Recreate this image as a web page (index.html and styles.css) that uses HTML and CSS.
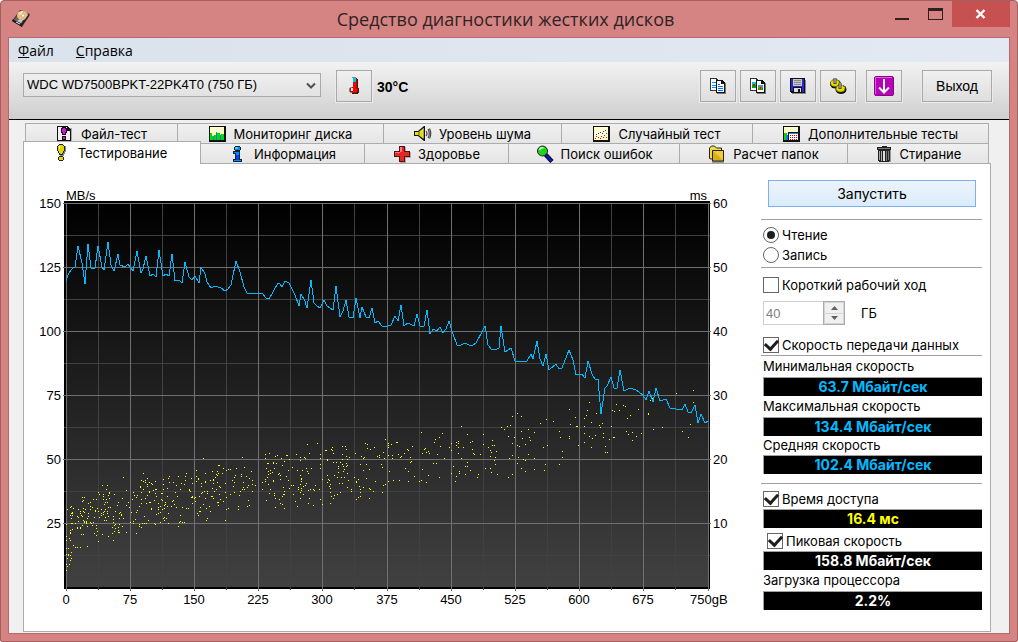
FILE: index.html
```
<!DOCTYPE html>
<html lang="ru">
<head>
<meta charset="utf-8">
<title>Средство диагностики жестких дисков</title>
<link rel="stylesheet" href="styles.css">
</head>
<body>
<div class="window">
  <header class="titlebar">
    <svg class="app-icon" width="20" height="20" viewBox="0 0 20 20" aria-hidden="true">
      <path d="M1 12 9 1 19 5 11 18Z" fill="#3c3a38"/>
      <path d="M1 12 11 18v-2L2 10Z" fill="#1c1c1c"/>
      <path d="M3 11 9 3l7 2-6 9Z" fill="#6b6662"/>
      <ellipse cx="11.500" cy="6.500" rx="5.500" ry="4.500" fill="#e9bd80"/>
      <path d="M7 5a5 4 0 0 1 5-3l-1 4Z" fill="#f7e1bb"/>
      <circle cx="12" cy="6.500" r="1.600" fill="#fff" stroke="#a99" stroke-width=".6"/>
      <path d="m6 12 4 2 2-3-3-1Z" fill="#c8c8c8"/>
      <path d="m5 13 4 2" stroke="#eee"/>
      <path d="m10 17 8-11" stroke="#222" stroke-width="1.500"/>
    </svg>
    <h1 class="title">Средство диагностики жестких дисков</h1>
    <div class="window-buttons">
      <button class="win-btn" aria-label="Свернуть"><svg width="16" height="14" viewBox="0 0 16 14"><path d="M0 11h14v2H0z" fill="#2c2020"/></svg></button>
      <button class="win-btn" aria-label="Развернуть"><svg width="16" height="14" viewBox="0 0 16 14"><path fill-rule="evenodd" d="M0 1h15v12H0zM1 4h13v8H1z" fill="#2c2020"/></svg></button>
      <button class="win-btn win-close" aria-label="Закрыть"><svg width="12" height="10" viewBox="0 0 12 10"><path d="m1.500 1 8 8m0-8-8 8" stroke="#fff" stroke-width="2.400"/></svg></button>
    </div>
  </header>

  <div class="client">
    <nav class="menubar">
      <button class="menu-item"><u>Ф</u>айл</button>
      <button class="menu-item"><u>С</u>правка</button>
    </nav>

    <div class="toolbar">
      <div class="drive-box">
        <select class="drive" aria-label="Диск"><option>WDC WD7500BPKT-22PK4T0 (750 ГБ)</option></select>
        <svg class="chevron" width="10" height="8" viewBox="0 0 10 8"><path d="m1 1.500 4 4 4-4" fill="none" stroke="#505050" stroke-width="2"/></svg>
      </div>
      <button class="tool" aria-label="Температура">
        <svg width="12" height="20" viewBox="0 0 12 20" shape-rendering="crispEdges">
          <path d="M8 3h2v9h1v5h-1v1H4v-1h5v-4H8z" fill="#222"/>
          <path d="M4 2h5v10h1v4H9v1H3v-1H2v-4h2z" fill="#c00"/>
          <path d="M4 2h4v5H4z" fill="#00c4d8"/><path d="M4 2h1v9H4z" fill="#bff"/>
          <path d="M5 6h3v7H5z" fill="#f00"/><path d="M3 12h2v3H3z" fill="#fff"/><path d="M2 11h2v1H2zM1 12h1v4H1zM2 16h2v1H2zM4 1h4v1H4z" fill="#888"/><path d="M5 13h4v3H5z" fill="#f00"/>
        </svg>
      </button>
      <output class="temp">30°C</output>
      <div class="tools">
        <button class="tool" aria-label="Копировать текст">
          <svg width="18" height="18" viewBox="0 0 18 18" shape-rendering="crispEdges">
            <path d="M1 1h6l3 3v10H1z" fill="#333"/><path d="M2 2h5v3h2v8H2z" fill="#fff"/><path d="M3 5h4v1H3zM3 8h5v1H3zM3 10h5v1H3z" fill="#0090ff"/>
            <path d="M9 4h6l2 3v10H8v-1h8V7z" fill="#777"/><path d="M7 3h6l3 3v10H7z" fill="#111"/><path d="M8 4h4v3h3v8H8z" fill="#fff"/><path d="M9 7h2v1H9zM9 9h5v1H9zM9 11h5v1H9zM9 13h5v1H9z" fill="#0070ff"/>
          </svg>
        </button>
        <button class="tool" aria-label="Копировать снимок">
          <svg width="18" height="18" viewBox="0 0 18 18" shape-rendering="crispEdges">
            <path d="M1 1h6l3 3v10H1z" fill="#333"/><path d="M2 2h5v3h2v8H2z" fill="#fff"/><path d="M3 5h5v3H3z" fill="#00c8d0"/><path d="M3 8h5v3H3z" fill="#0a0"/><path d="M4 7h2v2H4z" fill="#e00"/>
            <path d="M9 4h6l2 3v10H8v-1h8V7z" fill="#777"/><path d="M7 3h6l3 3v10H7z" fill="#111"/><path d="M8 4h4v3h3v8H8z" fill="#fff"/><path d="M9 8h5v3H9z" fill="#00b8e0"/><path d="M9 11h5v2H9z" fill="#0a0"/><path d="M10 9h3v3h-3z" fill="#c60"/><path d="M11 10h1v2h-1z" fill="#f00"/>
          </svg>
        </button>
        <button class="tool" aria-label="Сохранить">
          <svg width="18" height="18" viewBox="0 0 18 18" shape-rendering="crispEdges">
            <path d="M3 3h14v14H3z" fill="#888"/><path d="M1 1h15v15H2l-1-1z" fill="#111"/><path d="M2 2h2v12H2zM13 2h2v13h-2zM4 9h9v1H4z" fill="#2727d8"/><path d="M4 2h9v7H4z" fill="#c8c8c8"/><path d="M5 3h7v1H5zM5 5h7v1H5zM5 7h7v1H5z" fill="#888"/><path d="M5 11h7v4H5z" fill="#ddd"/><path d="M9 12h2v3H9z" fill="#111"/>
          </svg>
        </button>
        <button class="tool" aria-label="Настройки">
          <svg width="18" height="18" viewBox="0 0 18 18">
            <g fill="#111"><ellipse cx="6.500" cy="7" rx="5.500" ry="4.500"/><ellipse cx="12" cy="12.500" rx="5.500" ry="4.500"/></g>
            <g fill="#e6dc00" stroke="#5d5800" stroke-dasharray="2 1"><ellipse cx="6" cy="6" rx="4.500" ry="3.500"/><ellipse cx="11.500" cy="11.500" rx="4.500" ry="3.500"/></g>
            <path d="M6 1v6M11 6v6" stroke="#444" stroke-width="3"/><path d="M6 1v5M11 6v5" stroke="#ccc"/>
          </svg>
        </button>
        <button class="tool tool-gap" aria-label="Загрузить">
          <svg width="20" height="20" viewBox="0 0 20 20">
            <rect x=".5" y=".5" width="19" height="19" rx="1.500" fill="#b800b8" stroke="#7d0c80"/><path d="M1.500 18V1.500H18" fill="none" stroke="#e45ae4"/>
            <path d="M10 3v13M5 11.500l5 5 5-5" fill="none" stroke="#fff" stroke-width="2"/>
          </svg>
        </button>
        <button class="tool exit">Выход</button>
      </div>
    </div>

    <div class="workspace">
      <div class="tabs tabs-back" role="tablist">
        <button class="tab" role="tab">
          <svg width="18" height="18" viewBox="0 0 18 18" shape-rendering="crispEdges"><path d="M3 3h13v14H3z" fill="#aaa"/><path d="M1 1h10l4 4v11H1z" fill="#111"/><path d="M2 2h9v4h3v9H2z" fill="#f4f0f4"/><path d="M11 2h1v3h2v1h-3z" fill="#111"/><path d="M6 2h4v1h1v5h-1v2H6V8H5V3h1zM6 11h4v4H6z" fill="#111"/><path d="M7 3h2v1h1v3H9v2H7V7H6V4h1zM7 12h2v2H7z" fill="#e010e0"/></svg>
          <span>Файл-тест</span></button>
        <button class="tab" role="tab">
          <svg width="18" height="18" viewBox="0 0 18 18" shape-rendering="crispEdges"><path d="M0 1h17v16H0z" fill="#111"/><path d="M1 2h14v13H1z" fill="#ffffc8"/><path d="M1 8h2v3h1v4H1zM5 10h2v5H5zM8 8h3v7H8zM12 9h3v6h-3z" fill="#0d0"/><path d="M4 11h1v4H4zM7 7h1v8H7zM11 10h1v5h-1z" fill="#36f"/></svg>
          <span>Мониторинг диска</span></button>
        <button class="tab" role="tab">
          <svg width="18" height="18" viewBox="0 0 18 18"><path d="M0 6h4l6-5h1v15h-1l-6-5H0z" fill="#111"/><path d="M1 7h3.500L9 3.500v10L4.500 10H1z" fill="#e8e000"/><path d="M5 7v3" stroke="#555"/><path d="M9.500 3v10.500" stroke="#999"/><path d="M12 6q2 2.500 0 5M14 4q2.500 4.500 0 9M15.500 3.500q2.500 5 0 10" fill="none" stroke="#444" stroke-width="1.200"/></svg>
          <span>Уровень шума</span></button>
        <button class="tab" role="tab">
          <svg width="18" height="18" viewBox="0 0 18 18" shape-rendering="crispEdges"><path d="M0 1h17v16H0z" fill="#111"/><path d="M1 2h14v13H1z" fill="#ffffd0"/><path d="M3 9h1v1H3zM5 8h1v1H5zM7 7h1v1H7zM9 8h1v1H9zM10 6h1v1h-1zM12 5h1v1h-1zM13 8h1v1h-1z" fill="#22f"/><path d="M2 13h1v1H2zM3 11h1v1H3zM5 12h1v1H5zM7 13h1v1H7zM8 11h1v1H8zM10 12h1v1h-1zM11 10h1v1h-1zM13 12h1v1h-1z" fill="#e00"/></svg>
          <span>Случайный тест</span></button>
        <button class="tab" role="tab">
          <svg width="18" height="18" viewBox="0 0 18 18" shape-rendering="crispEdges"><path d="M0 1h17v16H0z" fill="#111"/><path d="M1 2h14v13H1z" fill="#ffffc8"/><path d="M1 8h3v7H1z" fill="#0d0"/><path d="M3 10h2v5H3z" fill="#36f"/><path d="M5 7h11v9H5z" fill="#111"/><path d="M6 8h9v7H6z" fill="#fff"/><path d="M6 8h9v1H6z" fill="#28f"/><path d="M7 10h1v1H7zM9 10h1v1H9zM11 10h1v1h-1zM13 10h1v1h-1zM7 12h1v1H7zM9 12h1v1H9zM11 12h1v1h-1zM13 12h1v1h-1zM7 14h1v1H7zM9 14h1v1H9zM11 14h1v1h-1zM13 14h1v1h-1z" fill="#d00"/></svg>
          <span>Дополнительные тесты</span></button>
      </div>
      <div class="tabs tabs-front" role="tablist">
        <button class="tab tab-active" role="tab" aria-selected="true">
          <svg width="18" height="18" viewBox="0 0 18 18" shape-rendering="crispEdges"><path d="M6 1h5v1h2v6h-1v2h-1v2H7V9H6z" fill="#888"/><path d="M6 0h4v1h1v1h1v5h-1v2h-1v2H6V9H5V7H4V2h1V1h1zM6 12h4v1h1v3h-1v1H6v-1H5v-3h1z" fill="#222"/><path d="M6 1h4v1h1v5h-1v2H9v1H7V9H6V7H5V2h1zM6 13h4v3H6z" fill="#e0d800"/><path d="M6 2h1v3H6z" fill="#ffa"/></svg>
          <span>Тестирование</span></button>
        <button class="tab" role="tab">
          <svg width="18" height="18" viewBox="0 0 18 18" shape-rendering="crispEdges"><path d="M6 1h5v1h1v3h-1v1H6V5H5V2h1zM4 6h7v8h2v3H4v-3h2V9H4z" fill="#123"/><path d="M6 2h5v3H6zM5 7h5v8h2v1H5v-1h2V8H5z" fill="#08f"/><path d="M6 2h3v2H6z" fill="#3cf"/><path d="M7 10h3v5H7z" fill="#04e"/></svg>
          <span>Информация</span></button>
        <button class="tab" role="tab">
          <svg width="18" height="18" viewBox="0 0 18 18" shape-rendering="crispEdges"><path d="M7 2h6v5h5v6h-5v5H7z" fill="#aaa"/><path d="M6 1h6v5h5v6h-5v5H6v-5H1V6h5z" fill="#511"/><path d="M7 2h4v5h5v4h-5v5H7v-5H2V7h5z" fill="#e02828"/><path d="M7 2h2v5H7zM2 7h5v1H2z" fill="#f77"/></svg>
          <span>Здоровье</span></button>
        <button class="tab" role="tab">
          <svg width="18" height="18" viewBox="0 0 18 18"><path d="m9 9 7 7.500" stroke="#111" stroke-width="4.500"/><path d="m10 10 5.500 6" stroke="#1111c8" stroke-width="2.500"/><circle cx="6.500" cy="6" r="5" fill="#1fd21f" stroke="#222"/><path d="M3.500 5q1-3 4-2" stroke="#cfc" stroke-width="1.500" fill="none"/></svg>
          <span>Поиск ошибок</span></button>
        <button class="tab" role="tab">
          <svg width="18" height="18" viewBox="0 0 18 18"><path d="M4 5h12v13H4z" fill="#999"/><path d="M1.500 13.500V3l2-2h3l2 2h5v11H3Z" fill="#f0dc40" stroke="#222"/><path d="M4.500 5.500h11v10.500h-11z" fill="#dcae14" stroke="#222"/><path d="m5 6 10 9V6Z" fill="#f0cc3a"/></svg>
          <span>Расчет папок</span></button>
        <button class="tab" role="tab">
          <svg width="18" height="18" viewBox="0 0 18 18" shape-rendering="crispEdges"><path d="M4 5h12v12H5z" fill="#999"/><path d="M7 1h5v1h4v3h-1v10l-1 2H4l-1-2V5H2V2h5z" fill="#222"/><path d="M3 3h12v1H3z" fill="#777"/><path d="M4 6h1v9H4zM6 6h1v10H6z" fill="#aaa"/><path d="M8 6h2v10H8z" fill="#ddd"/><path d="M11 6h1v10h-1zM13 6h1v9h-1z" fill="#777"/></svg>
          <span>Стирание</span></button>
      </div>

      <main class="panel">
        <svg class="chart" viewBox="24 164 733 460" preserveAspectRatio="xMinYMin meet" role="img" aria-label="Скорость передачи и время доступа">
          <defs><linearGradient id="plot-bg" x1="0" y1="0" x2="0" y2="1"><stop offset="0" stop-color="#000"/><stop offset="1" stop-color="#414141"/></linearGradient></defs>
          <rect x="64" y="201" width="646" height="388" fill="#000"/>
          <rect x="67" y="204" width="641" height="383" fill="url(#plot-bg)"/>
          <g id="grid" shape-rendering="crispEdges"></g>
          <path id="access-dots" stroke="#ff0" shape-rendering="crispEdges"/>
          <polyline id="speed-line" fill="none" stroke="#0bf" shape-rendering="crispEdges"/>
          <g id="axis-labels" class="axis"></g>
        </svg>

        <aside class="side">
          <button class="start">Запустить</button>
          <fieldset class="mode">
            <label class="row"><input type="radio" name="mode" class="radio" checked>Чтение</label>
            <label class="row"><input type="radio" name="mode" class="radio">Запись</label>
          </fieldset>
          <div class="stroke">
            <label class="row"><input type="checkbox" class="check">Короткий рабочий ход</label>
            <div class="size-row">
              <div class="spinner">
                <input id="size" class="size" type="text" value="40" disabled>
                <div class="spin-buttons">
                  <button class="spin" aria-label="Больше" disabled><svg width="7" height="4" viewBox="0 0 7 4"><path d="M0 4 3.500 0 7 4z" fill="#606060"/></svg></button>
                  <button class="spin" aria-label="Меньше" disabled><svg width="7" height="4" viewBox="0 0 7 4"><path d="m0 0 3.500 4L7 0z" fill="#606060"/></svg></button>
                </div>
              </div>
              <label for="size">ГБ</label>
            </div>
            <label class="row"><input type="checkbox" class="check" checked>Скорость передачи данных</label>
          </div>
          <div class="metrics speeds">
            <div class="caption">Минимальная скорость</div><output class="value">63.7 Мбайт/сек</output>
            <div class="caption">Максимальная скорость</div><output class="value">134.4 Мбайт/сек</output>
            <div class="caption caption-tight">Средняя скорость</div><output class="value">102.4 Мбайт/сек</output>
          </div>
          <div class="metrics extras">
            <label class="row"><input type="checkbox" class="check" checked>Время доступа</label><output class="value value-access">16.4 мс</output>
            <label class="row row-burst"><input type="checkbox" class="check" checked>Пиковая скорость</label><output class="value value-plain">158.8 Мбайт/сек</output>
            <div class="caption">Загрузка процессора</div><output class="value value-plain">2.2%</output>
          </div>
        </aside>
      </main>
    </div>
  </div>
</div>
<script src="chart.js"></script>
</body>
</html>
```
FILE: styles.css
```
* { box-sizing: border-box; }

body {
  margin: 0;
  background: #fff;
  color: #000;
  font: 13px/20px "Liberation Sans", Arial, sans-serif;
}

button { font: inherit; color: inherit; padding: 0; margin: 0; border: 0; background: none; }
svg { display: block; flex: none; }

.window {
  min-height: 100vh;
  display: flex;
  flex-direction: column;
  padding: 0 7px 7px;
  background: #d68383;
  border: 1px solid #a45f61;
  border-radius: 4px 4px 2px 2px;
}

.titlebar { height: 36px; display: flex; align-items: flex-start; padding-left: 3px; }
.app-icon { margin-top: 8px; }
.title {
  flex: 1;
  margin: 0;
  padding-left: 94px;
  text-align: center;
  font: 18px/36px "Open Sans", "Noto Sans", sans-serif;
  color: #2e2324;
}
.window-buttons { display: flex; }
.win-btn { width: 33px; height: 26px; display: grid; place-items: center; }
.win-close { width: 58px; background: #c75050; }

.client {
  flex: 1;
  display: flex;
  flex-direction: column;
  border: 1px solid #b36a6b;
  background: #f0f0f0;
}

.menubar {
  height: 24px;
  display: flex;
  gap: 22px;
  padding-left: 9px;
  background: linear-gradient(90deg, #dae2ec, #e2e9f2);
}
.menu-item { font: 14px/26px "Open Sans", "Noto Sans", sans-serif; }

.toolbar {
  height: 58px;
  display: flex;
  align-items: flex-start;
  padding: 8px 17px 0 14px;
  background: linear-gradient(#f2f2f2, #cfcfcf);
  border-bottom: 1px solid #000;
}
.drive-box { position: relative; width: 298px; margin: 3px 15px 0 0; }
.drive {
  appearance: none;
  display: block;
  width: 100%;
  height: 24px;
  padding: 0 24px 0 3px;
  border: 1px solid #a9a9a9;
  border-radius: 0;
  background: linear-gradient(#efefef, #e2e2e2);
  color: #000;
  font: inherit;
}
.chevron { position: absolute; right: 5px; top: 9px; pointer-events: none; }
.tool {
  width: 36px;
  height: 32px;
  display: grid;
  place-items: center;
  border: 1px solid #a9a9a9;
  background: linear-gradient(#f0f0f0, #dedede);
  box-shadow: 0 0 0 1px #ececec;
}
.temp { margin-left: 5px; font-weight: 700; font-size: 14px; line-height: 34px; }
.tools { display: flex; gap: 4px; margin-left: auto; }
.tool-gap { margin-left: 6px; }
.exit { width: 70px; margin-left: 16px; font-size: 14px; }

.workspace { flex: 1; display: flex; flex-direction: column; padding: 3px 18px 1px 14px; }
.tabs { display: grid; height: 20px; }
.tabs-back { margin: 0 2px; grid-template-columns: 153fr 206fr 178fr 191fr 236fr; }
.tabs-front { margin-right: 2px; grid-template-columns: 178fr 164fr 144fr 171fr 168fr 141fr; }
.tab {
  display: flex;
  justify-content: center;
  align-items: center;
  gap: 7px;
  min-width: 0;
  height: 20px;
  border: 1px solid #acacac;
  border-width: 1px 1px 0 0;
  background: linear-gradient(#f0f0f0, #e5e5e5);
  font: 13px/18px Inter, "Liberation Sans", sans-serif;
  white-space: nowrap;
}
.tabs-back .tab:first-child { border-left-width: 1px; }
.tab-active {
  height: 23px;
  margin-top: -2px;
  padding-right: 4px;
  border-width: 1px 1px 0 1px;
  background: #fff;
  z-index: 1;
}

.panel { flex: 1; display: flex; background: #fff; border: 1px solid #acacac; }
.chart { flex: 1; min-width: 0; width: 100%; height: auto; align-self: flex-start; }
.axis { font: 13px "Liberation Sans", Arial, sans-serif; }

.side {
  width: 233px;
  flex: none;
  padding: 16px 8px 12px 4px;
  font: 13px/20px Inter, "Liberation Sans", sans-serif;
}
.start {
  display: block;
  width: 208px;
  height: 27px;
  margin: 0 0 12px 7px;
  border: 1px solid #7eb0ea;
  background: linear-gradient(#ecf4fc, #dcebfb);
  font-size: 14px;
}
.mode { margin: 0; padding: 5px 0 2px 2px; border: solid #a0a0a0; border-width: 1px 0; }
.row { display: flex; align-items: center; gap: 3px; height: 20px; white-space: nowrap; }
.stroke { padding: 7px 0 0 2px; border-bottom: 1px solid #a0a0a0; }

.check, .radio {
  appearance: none;
  flex: none;
  display: grid;
  place-items: center;
  width: 16px;
  height: 16px;
  margin: 0;
  border: 1px solid #666;
  background: #fff;
}
.radio { border-radius: 50%; }
.radio:checked::before { content: ""; width: 8px; height: 8px; border-radius: 50%; background: #1e1e1e; }
.check:checked::before {
  content: "";
  width: 6px;
  height: 10px;
  margin-top: -3px;
  border: solid #1e1e1e;
  border-width: 0 3px 3px 0;
  transform: rotate(42deg);
}

.size-row { display: flex; align-items: center; gap: 16px; margin: 6px 0 10px; height: 24px; }
.spinner { display: flex; width: 82px; height: 24px; border: 1px solid #d0d0d0; }
.size { width: 60px; border: 0; padding: 0 2px; background: #fff; color: #808080; font: 13px "Liberation Sans", sans-serif; }
.spin-buttons { flex: 1; display: grid; grid-template-rows: 1fr 1fr; gap: 1px; padding: 1px; background: #d5d5d5; outline: 1px solid #acacac; }
.spin { display: grid; place-items: center; background: #f0f0f0; }

.metrics { padding-left: 2px; }
.caption { line-height: 21px; }
.caption-tight { line-height: 19px; }
.value {
  display: block;
  height: 19px;
  border: solid #a0a0a0;
  border-width: 1px 0 0 1px;
  background: #000;
  color: #0bf;
  text-align: center;
  font-size: 14px;
  font-weight: 700;
  line-height: 17px;
}
.value-access { color: #ff0; }
.value-plain { color: #fff; }
.extras { margin-top: 9px; padding-top: 5px; border-top: 1px solid #a0a0a0; }
.row-burst { margin-top: 3px; padding-left: 4px; }
```
FILE: chart.js
```
const NS = "http://www.w3.org/2000/svg";
const grid = document.getElementById("grid");
const labels = document.getElementById("axis-labels");

function bar(x, y, w, h, fill) {
  const r = document.createElementNS(NS, "rect");
  r.setAttribute("x", x); r.setAttribute("y", y);
  r.setAttribute("width", w); r.setAttribute("height", h);
  r.setAttribute("fill", fill);
  grid.appendChild(r);
}
function label(x, y, text, anchor) {
  const t = document.createElementNS(NS, "text");
  t.setAttribute("x", x); t.setAttribute("y", y);
  t.setAttribute("text-anchor", anchor);
  t.textContent = text;
  labels.appendChild(t);
}

const majorX = [66, 130, 194, 258, 322, 387, 451, 515, 579, 643, 708];
const majorY = [203, 267, 331, 395, 459, 523];
majorX.slice(0, -1).forEach(x => bar(x + 32, 204, 1, 386, "#414141"));
majorY.forEach(y => bar(64, y + 32, 646, 1, "#414141"));
majorX.forEach(x => bar(x, 203, 1, 388, "#707070"));
majorY.forEach(y => bar(63, y, 648, 1, "#707070"));

label(66, 200, "MB/s", "start");
label(707, 200, "ms", "end");
[150, 125, 100, 75, 50, 25].forEach((v, i) => label(61, majorY[i] + 5, v, "end"));
[60, 50, 40, 30, 20, 10].forEach((v, i) => label(713, majorY[i] + 5, v, "start"));
majorX.slice(0, -1).forEach((x, i) => label(x, 604, i * 75, "middle"));
label(690, 604, "750gB", "start");

document.getElementById("speed-line").setAttribute("points",
  "66,281 68,275 71,270 73,268 75,267 78,246 82,263 85,284 88,244 91,268 95,268 98,246 102,267 104,270 108,242 111,265 114,271 118,254 120,265 125,267 128,264 133,271 137,251 141,273 143,269 146,256 150,276 153,274 156,277 159,250 163,276 166,274 169,276 172,254 175,281 179,280 182,283 185,262 189,277 192,280 195,276 199,283 201,267 205,274 207,282 211,288 215,286 221,288 225,291 228,289 231,285 236,261 240,272 244,287 247,293 250,293 262,293 266,298 269,299 278,283 280,284 282,287 285,281 289,283 295,295 299,306 301,294 305,301 307,308 311,280 314,303 317,306 320,308 324,300 327,306 333,310 336,286 340,317 343,311 346,300 349,317 353,318 356,298 360,318 362,307 366,317 369,318 372,308 375,323 378,321 382,326 388,326 391,325 395,316 398,321 401,305 404,326 408,323 414,326 417,314 420,326 424,326 427,310 430,334 433,329 437,331 440,327 443,333 446,329 449,321 452,331 457,345 461,345 465,343 469,345 473,345 476,343 482,332 485,326 488,345 491,349 497,349 499,348 501,326 505,352 511,348 515,361 520,362 527,361 531,354 533,359 537,341 540,359 543,366 546,354 549,370 556,364 559,369 562,368 569,350 573,360 576,375 582,374 585,378 588,361 592,374 595,379 598,379 601,414 605,388 607,386 611,377 614,388 617,388 620,370 624,391 630,388 636,390 643,395 646,400 649,391 653,402 656,388 660,401 666,399 670,408 682,410 685,404 688,412 691,413 695,405 698,423 701,414 705,423 708,421");

const dots = "320,458 320,468 322,479 322,504 325,450 326,450 332,447 331,449 332,450 333,453 342,446 345,446 346,449 327,459 327,460 342,454 342,459 346,456 349,457 347,459 333,462 336,462 340,462 338,466 338,468 338,472 342,464 343,466 346,463 347,465 346,466 344,469 343,471 347,473 327,475 328,479 329,480 327,482 330,484 329,486 330,488 330,492 331,496 334,495 333,498 337,494 340,492 330,503 334,475 337,477 341,477 344,477 339,483 342,483 348,480 347,487 351,489 351,491 354,477 356,481 356,482 358,479 359,486 360,489 363,487 360,492 356,499 358,497 360,496 369,498 369,488 370,489 373,491 375,481 355,453 365,443 367,444 367,448 370,449 374,447 361,456 364,457 363,458 360,464 366,464 363,470 369,469 366,478 377,456 379,455 379,457 383,452 384,458 381,464 382,467 382,492 383,485 385,484 388,481 389,471 385,439 388,443 388,445 388,447 391,444 396,442 397,442 392,455 388,455 392,458 398,454 400,457 401,456 404,453 407,449 408,450 412,446 410,457 411,461 410,462 405,468 408,471 414,476 408,481 399,480 393,480 419,481 421,480 426,482 428,475 422,469 421,432 422,453 424,449 425,448 426,452 428,451 429,453 433,463 436,463 437,454 434,442 435,439 440,446 439,437 442,433 444,458 439,477 449,447 451,450 451,443 456,442 458,441 458,443 456,445 458,447 458,453 461,426 467,434 470,442 472,441 463,447 472,449 473,453 474,454 461,458 467,462 453,466 465,466 467,466 470,470 459,471 459,473 451,473 456,476 455,481 465,474 478,474 477,477 480,454 483,434 483,444 485,468 488,447 490,450 491,452 490,456 492,440 492,445 494,445 496,451 495,457 494,460 495,464 490,468 491,472 497,474 501,427 504,429 507,426 510,425 512,416 508,436 514,437 517,413 521,416 521,431 522,438 512,443 517,445 519,446 525,444 528,429 529,437 530,440 534,432 528,454 534,458 512,455 509,458 518,457 517,463 523,459 525,460 521,468 525,471 534,469 512,474 508,477 540,423 546,419 553,421 543,447 547,445 545,464 544,470 559,431 560,437 562,451 562,457 559,464 569,409 575,417 570,424 576,426 577,426 569,436 569,438 578,445 589,402 587,410 586,415 584,418 591,422 596,413 584,426 584,433 589,436 592,438 595,435 584,442 591,447 599,425 600,427 602,423 603,433 603,437 609,439 605,446 605,452 607,452 611,426 613,437 614,437 612,410 614,411 616,404 619,410 623,405 625,406 630,415 627,418 638,409 626,431 628,434 632,432 636,436 632,440 641,433 650,400 652,398 648,413 648,414 653,429 662,427 676,393 693,390 693,402 690,424 682,431 688,437 66,570 67,566 66,564 66,554 66,548 66,536 67,509 69,564 70,560 71,558 70,555 71,552 69,538 73,545 75,547 77,547 80,547 87,546 98,541 113,540 123,477 107,485 102,485 143,473 203,458 242,457 269,453 277,455 307,444 317,443 326,450 206,520 225,520 178,526"
  .split(" ").map(p => p.split(","));

// Dense sample clusters: x range, top and bottom, number of samples.
const clusters = [
  [66, 72, 505, 565, 10], [70, 82, 502, 540, 26], [82, 98, 496, 536, 44],
  [98, 120, 489, 538, 54], [120, 140, 488, 536, 28], [140, 165, 476, 528, 62],
  [165, 194, 471, 526, 44], [194, 212, 469, 518, 32], [212, 230, 464, 515, 34],
  [230, 256, 460, 510, 34], [262, 290, 453, 512, 54], [290, 322, 452, 506, 46]
];
let seed = 7331;
const random = () => (seed = (seed * 16807) % 2147483647) / 2147483647;
for (const [x0, x1, top, bottom, n] of clusters) {
  for (let i = 0; i < n; i++) {
    const x = Math.floor(x0 + random() * (x1 - x0));
    const spread = i % 3 ? random() : (random() + random()) / 2;
    dots.push([x, Math.round(top + spread * (bottom - top))]);
  }
}
document.getElementById("access-dots").setAttribute("d",
  dots.map(([x, y]) => `M${x} ${Number(y) + 0.5}h1`).join(""));
```
